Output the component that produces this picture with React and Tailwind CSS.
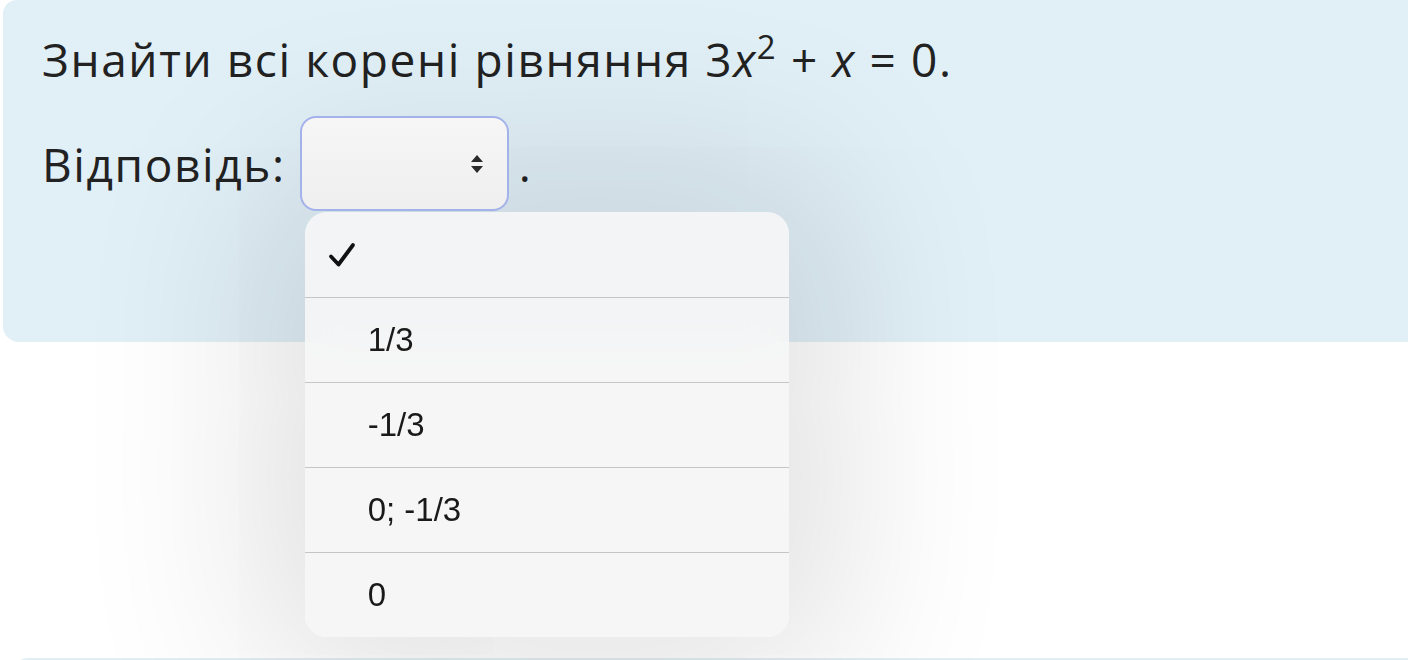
import { useState } from 'react';

const options = ['', '1/3', '-1/3', '0; -1/3', '0'];

function Check() {
    return (
        <svg width="28" height="26" viewBox="0 0 28 26" fill="none">
            <path d="M3 14.5 L10.5 22.5 L25 3" stroke="#111" strokeWidth="3.8" strokeLinecap="round" strokeLinejoin="round" />
        </svg>
    );
}

function UpDown() {
    return (
        <svg width="14" height="20" viewBox="0 0 14 20">
            <path d="M7 1 L13 8 H1 Z" fill="#2a2a2a" />
            <path d="M7 19 L13 12 H1 Z" fill="#2a2a2a" />
        </svg>
    );
}

export default function App() {
    const [selected] = useState(0);

    return (
        <div className="w-[1408px] h-[660px] overflow-hidden bg-white relative">
            <div className="ml-[3px] h-[342px] bg-[#e1eff7] rounded-tl-[14px] rounded-bl-[16px] pl-[39px] pt-[27px]"
                 style={{ fontFamily: '"Open Sans", "Noto Sans", sans-serif' }}>
                <p className="text-[46px] leading-[64px] text-[#222] tracking-[1.6px]">
                    Знайти всі корені рівняння 3<i>x</i><span className="text-[33px] align-top leading-[40px]">2</span> + <i>x</i> = 0.
                </p>
                <div className="flex items-center mt-[25px] text-[46px] text-[#222] tracking-[1.6px]">
                    <span className="leading-[64px]">Відповідь:</span>
                    <div className="relative ml-[14px]">
                        <div className="relative z-20 w-[209px] h-[95px] rounded-[16px] border-2 border-[#a3b2ea] bg-gradient-to-b from-[#f7f6f6] to-[#efefef] flex items-center justify-end pr-[23px]">
                            <UpDown />
                        </div>
                        <div className="absolute left-[5px] top-[96px] z-10 w-[484px] rounded-[22px] bg-[#f5f5f5]/85 backdrop-blur-xl shadow-[0_0_180px_50px_rgba(0,0,0,0.12)] overflow-hidden"
                             style={{ fontFamily: '"Liberation Sans", Arial, sans-serif' }}>
                            {options.map((opt, i) => (
                                <div key={i} className={`h-[85px] flex items-center ${i > 0 ? 'border-t border-[#c6c6c6]' : ''}`}>
                                    <div className="w-[63px] flex justify-end pr-[12px]">
                                        {i === selected && <Check />}
                                    </div>
                                    <span className="text-[33px] text-[#1a1a1a] tracking-normal">{opt}</span>
                                </div>
                            ))}
                        </div>
                    </div>
                    <span className="ml-[10px] leading-[64px]">.</span>
                </div>
            </div>
            <div className="ml-[14px] mt-[316px] h-[40px] bg-[#e1eef3] rounded-tl-[14px]" />
        </div>
    );
}
